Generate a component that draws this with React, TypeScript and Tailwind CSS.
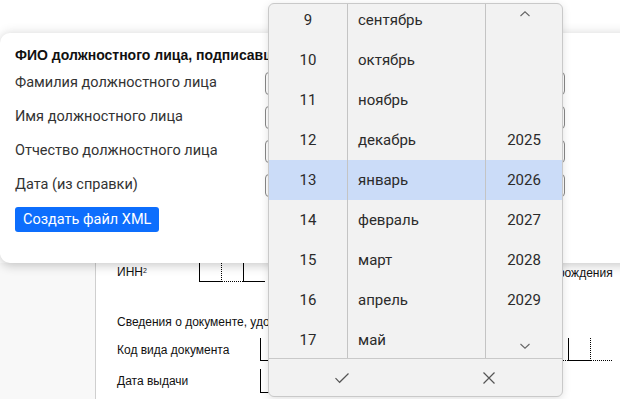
import React from "react";

const days = [9, 10, 11, 12, 13, 14, 15, 16, 17];
const months = [
  "сентябрь",
  "октябрь",
  "ноябрь",
  "декабрь",
  "январь",
  "февраль",
  "март",
  "апрель",
  "май",
];
const years: (number | null)[] = [null, null, null, 2025, 2026, 2027, 2028, 2029, null];
const SELECTED = 4;

const fields = [
  "Фамилия должностного лица",
  "Имя должностного лица",
  "Отчество должностного лица",
  "Дата (из справки)",
];

function Cells({ count }: { count: number }) {
  return (
    <div className="flex h-full">
      {Array.from({ length: count }).map((_, i) => (
        <div
          key={i}
          className={`h-full w-[22px] shrink-0 border-l border-black ${
            i % 2 === 0 ? "border-b border-b-black" : "border-b border-dotted border-b-black"
          }`}
        />
      ))}
    </div>
  );
}

function DatePicker() {
  return (
    <div className="absolute left-[268px] top-[3px] z-20 flex h-[394px] w-[295px] flex-col overflow-hidden rounded-[6px] border border-[#c9c9c9] bg-[#f2f2f2] shadow-[0_2px_8px_rgba(0,0,0,0.12)] font-['Roboto',sans-serif] text-[15px] text-[#2b2b2b]">
      <div className="relative h-[354px] overflow-hidden">
        <div className="mt-[-4px]">
          {days.map((d, i) => (
            <div
              key={d}
              className={`grid h-[40px] grid-cols-[79px_138px_1fr] ${i === SELECTED ? "bg-[#cbdcf8]" : ""}`}
            >
              <div className="flex items-center justify-center border-r border-[#c4c4c4]">{d}</div>
              <div className="flex items-center border-r border-[#c4c4c4] pl-[10px]">{months[i]}</div>
              <div className="flex items-center justify-center">{years[i] ?? ""}</div>
            </div>
          ))}
        </div>
        <svg
          className="absolute left-[250px] top-[6px]"
          width="12"
          height="8"
          viewBox="0 0 12 8"
          fill="none"
          stroke="#666"
          strokeWidth="1.1"
        >
          <path d="M1.5 6 L6 1.8 L10.5 6" />
        </svg>
        <svg
          className="absolute left-[250px] top-[338px]"
          width="12"
          height="8"
          viewBox="0 0 12 8"
          fill="none"
          stroke="#666"
          strokeWidth="1.1"
        >
          <path d="M1.5 2 L6 6.2 L10.5 2" />
        </svg>
      </div>
      <div className="grid flex-1 grid-cols-2 border-t border-[#c9c9c9]">
        <button type="button" className="flex items-center justify-center">
          <svg width="16" height="12" viewBox="0 0 16 12" fill="none" stroke="#555" strokeWidth="1.2">
            <path d="M1.5 6.2 L5.6 10.3 L14.5 1.5" />
          </svg>
        </button>
        <button type="button" className="flex items-center justify-center">
          <svg width="14" height="14" viewBox="0 0 14 14" fill="none" stroke="#555" strokeWidth="1.2">
            <path d="M1.5 1.5 L12.5 12.5 M12.5 1.5 L1.5 12.5" />
          </svg>
        </button>
      </div>
    </div>
  );
}

export default function App() {
  return (
    <div className="relative h-[399px] w-[620px] overflow-hidden bg-white font-['Liberation_Sans',Arial,sans-serif] text-[#222]">
      <div className="pt-[33px]">
        <div className="relative z-10 h-[230px] w-[660px] rounded-[10px] bg-white pl-[15px] pt-[13px] shadow-[0_-3px_10px_rgba(0,0,0,0.07),0_4px_10px_rgba(0,0,0,0.16)] font-['Roboto',sans-serif]">
          <h3 className="h-[18px] w-[253px] overflow-hidden whitespace-nowrap font-['Liberation_Sans',Arial,sans-serif] text-[14px] font-bold leading-[18px] text-[#111]">
            ФИО должностного лица, подписавшего справку
          </h3>
          <div className="mt-[2px]">
            {fields.map((f) => (
              <div key={f} className="flex h-[34px] items-center">
                <span className="w-[250px] text-[14.5px] text-[#333]">{f}</span>
                <input
                  type="text"
                  readOnly
                  className="h-[23px] w-[300px] rounded-[4px] border border-[#888] bg-white"
                />
              </div>
            ))}
          </div>
          <button
            type="button"
            className="mt-[5px] h-[25px] rounded-[3px] bg-[#0d6efd] px-[8px] text-[14.5px] text-white"
          >
            Создать файл XML
          </button>
        </div>
      </div>

      <div className="flex h-[140px] text-[12px] text-[#111]">
        <div className="w-[96px] shrink-0 border-r border-[#cfcfcf] bg-[#f8f8f8]" />
        <div className="flex-1 overflow-hidden">
          <div className="relative flex h-[19px] items-end">
            <span className="ml-[21px] w-[82px] pb-[1px]">
              ИНН<sup className="text-[7px]">2</sup>
            </span>
            <div className="h-[19px] w-[67px]">
              <Cells count={3} />
            </div>
            <span className="absolute left-[432px] top-[1px] whitespace-nowrap">Дата рождения</span>
          </div>
          <div className="ml-[21px] mt-[31px] h-[16px] whitespace-nowrap">
            Сведения о документе, удостоверяющем личность
          </div>
          <div className="mt-[9px] flex h-[23px] items-center">
            <span className="ml-[21px] w-[143px] whitespace-nowrap">Код вида документа</span>
            <div className="h-[23px]">
              <Cells count={16} />
            </div>
          </div>
          <div className="mt-[8px] flex h-[24px] items-center">
            <span className="ml-[21px] w-[143px] whitespace-nowrap">Дата выдачи</span>
            <div className="h-[24px]">
              <Cells count={10} />
            </div>
          </div>
        </div>
      </div>

      <DatePicker />
    </div>
  );
}
